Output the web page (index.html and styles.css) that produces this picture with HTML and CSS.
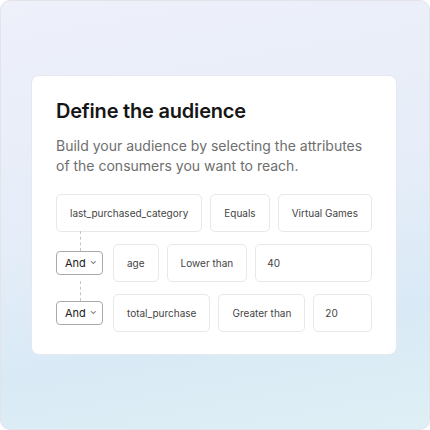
FILE: index.html
```html
<!DOCTYPE html>
<html lang="en">
<head>
    <meta charset="UTF-8">
    <title>Define the audience</title>
    <link rel="stylesheet" href="styles.css">
</head>
<body>
    <div class="frame">
        <div class="card">
            <h2>Define the audience</h2>
            <p>Build your audience by selecting the attributes of the consumers you want to reach.</p>
            <div class="rules">
                <div class="rule">
                    <div class="field">last_purchased_category</div>
                    <div class="field">Equals</div>
                    <div class="field grow">Virtual Games</div>
                </div>
                <div class="rule">
                    <div class="join"><button class="and">And <span class="chev">&#8964;</span></button></div>
                    <div class="field">age</div>
                    <div class="field">Lower than</div>
                    <div class="field grow value">40</div>
                </div>
                <div class="rule">
                    <div class="join"><button class="and">And <span class="chev">&#8964;</span></button></div>
                    <div class="field">total_purchase</div>
                    <div class="field">Greater than</div>
                    <div class="field grow value">20</div>
                </div>
            </div>
        </div>
    </div>
</body>
</html>
```

FILE: styles.css
```css
* { box-sizing: border-box; font-family: Inter, "Noto Sans", sans-serif; }
body { margin: 0; background: #fff; }
.frame {
    width: 430px; height: 430px;
    border: 1px solid #e4e4e8; border-radius: 10px;
    background: linear-gradient(170deg, #eef0fa 0%, #e6edf8 45%, #d9eaf6 75%, #dfeff5 100%);
    display: flex; justify-content: center; align-items: center;
}
.card {
    width: 366px; height: 280px; margin-left: -2px;
    background: #fff; border: 1px solid #e6e8ee; border-radius: 8px;
    padding: 23px 24px;
}
h2 { margin: 0; font-size: 20px; line-height: 24px; font-weight: 600; color: #161616; letter-spacing: -0.2px; }
p { margin: 13px 0 18px; font-size: 14px; line-height: 20px; color: #6e6e6e; }
.rules { display: flex; flex-direction: column; gap: 12px; }
.rule { display: flex; align-items: center; gap: 8px; height: 38px; }
.field {
    height: 38px; padding: 0 13px;
    display: flex; align-items: center; justify-content: center;
    border: 1px solid #e8e8ea; border-radius: 5px;
    font-size: 10px; color: #444; white-space: nowrap;
}
.grow { flex: 1; }
.value { justify-content: flex-start; padding-left: 11px; }
.join { position: relative; width: 47px; margin-right: 2px; }
.join::before {
    content: ""; position: absolute; left: 24px; top: -20px; height: 20px;
    border-left: 1px dashed #c4c4c4;
}
.and {
    width: 47px; height: 24px; padding: 0 0 0 8px;
    display: flex; align-items: center; gap: 4px;
    background: #fff; border: 1px solid #a9a9ad; border-radius: 4px;
    font-size: 11px; color: #222; cursor: pointer;
}
.chev { font-size: 9px; line-height: 1; margin-top: -5px; color: #555; }
```
